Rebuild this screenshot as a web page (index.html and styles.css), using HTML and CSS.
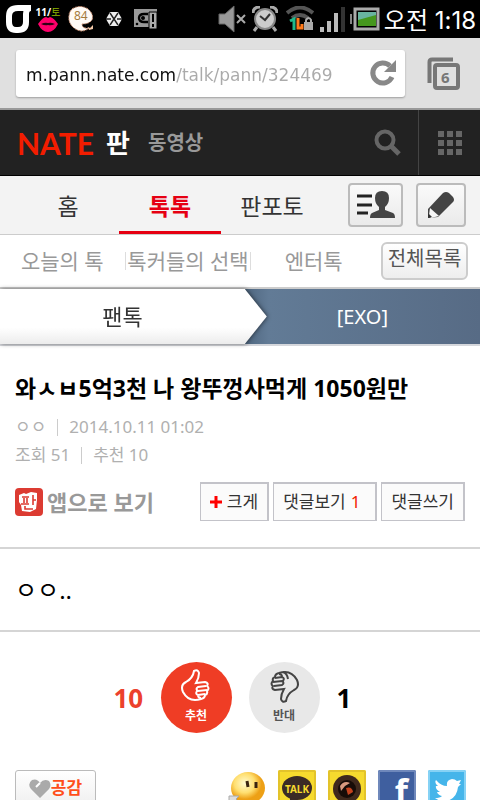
FILE: index.html
```html
<!DOCTYPE html>
<html lang="ko">

<head>
    <meta charset="UTF-8">
    <meta name="viewport" content="width=device-width, initial-scale=1.0">
    <title>네이트 판</title>
    <link rel="stylesheet" href="styles.css">
</head>

<body>
    <div class="screen">
        <!-- 상태바 -->
        <div class="status">
            <svg class="status-logo" width="28" height="30" viewBox="0 0 28 30">
                <path d="M27 4H14Q5 4 5 12v6q0 8 7 8h2q8 0 8-8V10q0-6 5-6" fill="none" stroke="#fff" stroke-width="6" />
            </svg>
            <div class="dday">
                <span class="dday-text">11/<b>토</b></span>
                <svg width="20" height="15" viewBox="0 0 20 15">
                    <path d="M0 7Q5 0 8 0l2 1 2-1q4 1 8 7-4 8-10 8T0 7z" fill="#ff006b" />
                    <path d="M3 7q4-2 7-1 3-1 7 1-4 2-7 1-3 1-7-1z" fill="#300015" />
                </svg>
            </div>
            <div class="bubble">
                <svg width="26" height="26" viewBox="0 0 26 26">
                    <path d="M4 3Q12-2 20 3q6 5 4 11-3 4-10 4 0 5 7 4-7 6-15 0Q0 17 1 10q0-4 3-7z" fill="#fffaf5" stroke="#d89878" stroke-dasharray="2 1" />
                    <path d="M20 21l2 1 3-3v4l-4 1z" fill="#f4c9a8" />
                </svg>
                <span class="bubble-text">84</span>
            </div>
            <svg class="status-exo" width="16" height="16" viewBox="0 0 16 16">
                <path d="M4 1h8l4 7-4 7H4L0 8z" fill="#eee" />
                <path d="M4 2l8 12M12 2L4 14M0 8h5M11 8h5" stroke="#222" stroke-width="1.4" />
            </svg>
            <svg class="status-disk" width="24" height="20" viewBox="0 0 24 20">
                <path d="M0 0h23v9h-7v9H0z" fill="#999" />
                <path d="M14 5H10Q5 5 5 9t5 4h4" fill="none" stroke="#000" stroke-width="2.4" />
                <circle cx="9" cy="9" r="2" fill="#000" />
                <circle cx="3" cy="15" r="1.3" fill="#000" />
                <path d="M15 3h8v17h-8z" fill="#aaa" stroke="#000" />
                <path d="M19 5v8M19 15v3" stroke="#000" stroke-width="2" />
            </svg>
            <div class="status-right">
                <svg width="30" height="28" viewBox="0 0 30 28">
                    <path d="M1 9h6l9-8v26l-9-8H1z" fill="#999" stroke="#666" />
                    <path d="M19 10l8 8M27 10l-8 8" stroke="#aaa" stroke-width="2" />
                </svg>
                <svg width="26" height="26" viewBox="0 0 26 26">
                    <path d="M5 21l-3 4M21 21l3 4" stroke="#aaa" stroke-width="3" />
                    <path d="M1 7q0-6 7-6M25 7q0-6-7-6" fill="none" stroke="#aaa" stroke-width="3" />
                    <circle cx="13" cy="13" r="10" fill="#ccc" stroke="#888" stroke-width="2" />
                    <path d="M8 10l5 4 5-6" fill="none" stroke="#333" stroke-width="2" />
                </svg>
                <svg class="status-wifi" width="28" height="26" viewBox="0 0 28 26">
                    <path d="M1 7q13-11 26 0M6 12q8-6 16 0" fill="none" stroke="#555" stroke-width="4" />
                    <path d="M4 15l4-2v11" fill="none" stroke="#1fb88a" stroke-width="3" />
                    <path d="M12 12v10h4v-4" fill="none" stroke="#ff7a1a" stroke-width="3" />
                    <path d="M20 17v-3q3-4 5 0v3" fill="none" stroke="#aaa" stroke-width="2" />
                    <path d="M18 16h9v8h-9z" fill="#aaa" />
                </svg>
                <svg class="status-signal" width="25" height="25" viewBox="0 0 25 25">
                    <path d="M0 20h4v5H0zM7 14h4v11H7zM14 6h4v19h-4z" fill="#bbb" />
                    <path d="M21 0h4v25h-4z" fill="#333" />
                </svg>
                <svg width="30" height="24" viewBox="0 0 30 24">
                    <path d="M1 7v10" stroke="#888" stroke-width="2" />
                    <path d="M5 2h23v20H5z" fill="#000" stroke="#aaa" stroke-width="3" />
                    <path d="M8 5h18v14H8z" fill="#45971d" />
                    <path d="M8 5h18v3L8 13z" fill="#69b4a0" />
                </svg>
                <span class="clock">오전 1:18</span>
            </div>
        </div>

        <!-- 주소창 -->
        <div class="browser">
            <div class="omnibox">
                <input class="url" type="text" value="m.pann.nate.com/talk/pann/324469" aria-label="주소">
                <button class="plain" type="button" aria-label="새로고침">
                    <svg width="28" height="28" viewBox="0 0 28 28">
                        <path d="M21 7A10 10 0 1 0 23 18" fill="none" stroke="#888" stroke-width="5" />
                        <path d="M27 1v12H15z" fill="#888" />
                    </svg>
                </button>
            </div>
            <button class="plain windows" type="button" aria-label="탭">
                <svg width="33" height="33" viewBox="0 0 33 33">
                    <path d="M2.500 26V5q0-2.500 2.500-2.500h21" fill="none" stroke="#777" stroke-width="4" />
                    <rect x="8" y="8" width="23" height="23" rx="2" fill="#e0e0e0" stroke="#777" stroke-width="4" />
                </svg>
                <span class="windows-count">6</span>
            </button>
        </div>

        <header class="header">
            <a class="logo" href="#">NATE</a>
            <a class="service" href="#">판</a>
            <a class="video" href="#">동영상</a>
            <button class="plain search" type="button" aria-label="검색">
                <svg width="28" height="28" viewBox="0 0 28 28">
                    <circle cx="11" cy="11" r="8.500" fill="none" stroke="#666" stroke-width="4" />
                    <path d="M17 17l8 8" stroke="#666" stroke-width="5" />
                </svg>
            </button>
            <button class="plain menu" type="button" aria-label="전체 서비스">
                <svg width="24" height="24" viewBox="0 0 24 24">
                    <path d="M0 0h6v6H0zM9 0h6v6H9zM18 0h6v6h-6zM0 9h6v6H0zM9 9h6v6H9zM18 9h6v6h-6zM0 18h6v6H0zM9 18h6v6H9zM18 18h6v6h-6z" fill="#666" />
                </svg>
            </button>
        </header>

        <nav class="tabs">
            <a class="tab" href="#">홈</a>
            <a class="tab on" href="#">톡톡</a>
            <a class="tab" href="#">판포토</a>
            <button class="tool tool-user" type="button" aria-label="내 글">
                <svg width="40" height="28" viewBox="0 0 40 28">
                    <path d="M1 5h15M1 14h15M1 22h11" stroke="#222" stroke-width="3" />
                    <path d="M26 0q7 0 7 7 0 6-4 9v3l8 3q2 1 2 5H14q0-4 2-5l7-3v-3q-4-3-4-9 0-7 7-7z" fill="#444" />
                </svg>
            </button>
            <button class="tool" type="button" aria-label="글쓰기">
                <svg width="28" height="28" viewBox="0 0 28 28">
                    <path d="M1 27V18L16 2q3-2 6 0l4 4q2 3 0 5L11 26z" fill="#444" />
                    <path d="M3 17l9 8-8 2-2-3z" fill="#f5f5f5" />
                    <path d="M1 27v-5l4 4z" fill="#333" />
                </svg>
            </button>
        </nav>

        <nav class="subnav">
            <a class="sub" href="#">오늘의 톡</a>
            <a class="sub" href="#">톡커들의 선택</a>
            <a class="sub" href="#">엔터톡</a>
            <button class="all" type="button">전체목록</button>
        </nav>

        <div class="path">
            <a class="path-item path-first" href="#">팬톡</a>
            <a class="path-item" href="#">[EXO]</a>
        </div>

        <main>
            <section class="post-head">
                <h1 class="title">와ㅅㅂ5억3천 나 왕뚜껑사먹게 1050원만</h1>
                <p class="meta"><span>ㅇㅇ</span><i class="bar"></i><span>2014.10.11 01:02</span></p>
                <p class="meta"><span>조회 51</span><i class="bar"></i><span>추천 10</span></p>
                <div class="actions">
                    <a class="app" href="#">
                        <svg width="28" height="28" viewBox="0 0 28 28">
                            <rect width="28" height="28" rx="4" fill="#dc3b32" />
                            <path d="M4 7l5-2 2 1 5-2 6 1v7l-1 9-6 3-8-1-1-6-2-3z" fill="#fff" />
                            <path d="M7 9h7M9 10v5M12 10v5M6 16h8M18 7v10M18 12h3M10 18v3h8" fill="none" stroke="#dc3b32" stroke-width="1.6" />
                        </svg>
                        <span>앱으로 보기</span>
                    </a>
                    <button class="act" type="button">
                        <svg width="12" height="12" viewBox="0 0 12 12">
                            <path d="M6 0v12M0 6h12" stroke="#f00" stroke-width="3" />
                        </svg>
                        크게
                    </button>
                    <button class="act act-count" type="button">댓글보기 <em>1</em></button>
                    <button class="act" type="button">댓글쓰기</button>
                </div>
            </section>

            <section class="post-body">ㅇㅇ..</section>

            <section class="vote">
                <span class="num num-up">10</span>
                <button class="circle up" type="button">
                    <svg width="32" height="34" viewBox="0 0 32 34">
                        <path d="M3 23q-3-7 3-10 7-4 8-11 4-2 5 2 0 5-3 10l9-1q4 1 2 4 3 2 0 5 1 3-2 4 0 3-4 4-12 4-18-7z" fill="none" stroke="#fff" stroke-width="2" />
                        <path d="M26 17l-8 1q-3 2 0 4l9-1M17 22q-2 3 1 4l7-1M18 26q0 3 3 3" fill="none" stroke="#fff" stroke-width="2" />
                    </svg>
                    <span>추천</span>
                </button>
                <button class="circle down" type="button">
                    <svg width="32" height="34" viewBox="0 0 32 34">
                        <path d="M29 11q3 7-3 10-7 4-8 11-4 2-5-2 0-5 3-10l-9 1q-4-1-2-4-3-2 0-5-1-3 2-4 0-3 4-4 12-4 18 7z" fill="none" stroke="#444" stroke-width="2" />
                        <path d="M6 17l8-1q3-2 0-4l-9 1M15 12q2-3-1-4l-7 1M14 8q0-3-3-3M15 3q4 1 5 7" fill="none" stroke="#444" stroke-width="2" />
                    </svg>
                    <span>반대</span>
                </button>
                <span class="num">1</span>
            </section>

            <section class="share">
                <button class="like" type="button">
                    <svg width="22" height="19" viewBox="0 0 22 19">
                        <path d="M11 19L2 10Q-2 5 3 1q5-2 8 3 4-5 9-2 3 4 0 8z" fill="#aaa" />
                        <path d="M11 4L7 8" stroke="#fff" stroke-width="2" />
                    </svg>
                    공감
                </button>
                <a class="sns" href="#" aria-label="네이트온">
                    <svg width="38" height="38" viewBox="0 0 38 38">
                        <defs>
                            <radialGradient id="face" cx=".4" cy=".35">
                                <stop offset="0" stop-color="#fffbd0" />
                                <stop offset=".6" stop-color="#ffdf70" />
                                <stop offset="1" stop-color="#eda016" />
                            </radialGradient>
                        </defs>
                        <ellipse cx="20" cy="18" rx="17" ry="16" fill="url(#face)" />
                        <path d="M19 11l1 6M28 12v6" stroke="#3a2410" stroke-width="3" />
                        <path d="M1 26h10l-3 3 5 5-3 4-6-5-3 3z" fill="#ddd" stroke="#aaa" />
                    </svg>
                </a>
                <a class="sns talk" href="#" aria-label="카카오톡">
                    <svg width="38" height="38" viewBox="0 0 38 38">
                        <ellipse cx="19" cy="18" rx="15" ry="12" fill="#3b2b26" />
                        <path d="M12 27v8l8-6z" fill="#3b2b26" />
                    </svg>
                    <span class="talk-text">TALK</span>
                </a>
                <a class="sns story" href="#" aria-label="카카오스토리">
                    <svg width="38" height="38" viewBox="0 0 38 38">
                        <circle cx="19" cy="19" r="14" fill="#40291d" />
                        <circle cx="19" cy="19" r="9" fill="#180c08" />
                        <path d="M12 16q4-6 10-3l-5 3-4 5z" fill="#d99a80" />
                        <path d="M18 18q6-2 7 4l-5 3z" fill="#c6431e" />
                    </svg>
                </a>
                <a class="sns facebook" href="#">f</a>
                <a class="sns twitter" href="#" aria-label="트위터">
                    <svg width="38" height="38" viewBox="0 0 38 38">
                        <path d="M8 10q5 6 11 6-1-6 5-7 3 0 5 2l4-1-2 4 2 0-3 3q-1 11-11 14-7 1-12-3 5 0 7-2-4-1-5-4h3q-5-3-4-6l2 0Q6 13 8 10z" fill="#fff" />
                    </svg>
                </a>
            </section>
        </main>
    </div>
</body>

</html>
```
FILE: styles.css
```css
* {
    box-sizing: border-box;
}

body {
    margin: 0;
    background: #fff;
    color: #000;
    font-family: "Noto Sans", "Noto Sans CJK KR", sans-serif;
}

a {
    color: inherit;
    text-decoration: none;
}

button {
    padding: 0;
    font-family: inherit;
    color: inherit;
}

svg {
    display: block;
    flex: none;
}

h1,
p {
    margin: 0;
}

.screen {
    height: 100vh;
    overflow: hidden;
}

.plain {
    border: 0;
    background: none;
}

/* 상태바 */
.status {
    display: flex;
    align-items: center;
    height: 38px;
    padding: 0 4px;
    background: #000;
    color: #fff;
}

.dday {
    display: flex;
    flex-direction: column;
    align-items: center;
    width: 28px;
    margin-left: 2px;
}

.dday-text {
    font-size: 10px;
    line-height: 10px;
    font-weight: bold;
}

.dday-text b {
    font-weight: normal;
    color: #8db600;
}

.bubble {
    position: relative;
    margin-left: 6px;
}

.bubble-text {
    position: absolute;
    top: 4px;
    left: 6px;
    font-size: 12px;
    line-height: 12px;
    color: #a57b3c;
}

.status-exo {
    margin-left: 12px;
}

.status-disk {
    margin-left: 12px;
}

.status-right {
    display: flex;
    align-items: center;
    gap: 4px;
    margin-left: auto;
}

.status-signal {
    margin: 0 1px 0 2px;
}

.status-wifi {
    margin-left: 4px;
}

.clock {
    padding-top: 4px;
    font-family: Inter, "Noto Sans CJK KR", sans-serif;
    font-size: 24px;
    line-height: 30px;
    white-space: nowrap;
}

/* 주소창 */
.browser {
    display: flex;
    align-items: center;
    height: 72px;
    padding: 0 20px 0 16px;
    border-bottom: 2px solid #999;
    background: #e0e0e0;
}

.omnibox {
    display: flex;
    flex: 1;
    align-items: center;
    gap: 8px;
    min-width: 0;
    height: 47px;
    padding: 0 8px 0 10px;
    border-radius: 3px;
    background: #fff;
    box-shadow: 0 1px 2px rgba(0, 0, 0, .3);
}

.url {
    flex: 1;
    min-width: 0;
    padding: 4px 0 0;
    border: 0;
    outline: 0;
    background: linear-gradient(90deg, #111 149px, #aaa 149px);
    -webkit-background-clip: text;
    background-clip: text;
    color: transparent;
    font-family: "DejaVu Sans", sans-serif;
    font-size: 17px;
    line-height: 28px;
}

.windows {
    position: relative;
    margin-left: 22px;
}

.windows-count {
    position: absolute;
    top: 10px;
    left: 14px;
    font-size: 15px;
    line-height: 20px;
    font-weight: bold;
    color: #777;
}

/* 헤더 */
.header {
    display: flex;
    align-items: center;
    height: 66px;
    padding-left: 17px;
    border-bottom: 1px solid #000;
    background: #222;
}

.logo {
    font-family: Lato, sans-serif;
    font-size: 30px;
    font-weight: bold;
    color: #f21d00;
}

.service {
    margin-left: 12px;
    font-size: 26px;
    line-height: 36px;
    font-weight: bold;
    color: #fff;
}

.video {
    margin-left: 18px;
    font-size: 20px;
    line-height: 30px;
    font-weight: bold;
    color: #999;
}

.search {
    margin: 0 16px 0 auto;
}

.menu {
    display: flex;
    align-items: center;
    justify-content: center;
    width: 62px;
    height: 65px;
    border-left: 1px solid #444;
}

/* 탭 */
.tabs {
    display: flex;
    align-items: center;
    height: 59px;
    padding: 0 14px 0 17px;
    border-bottom: 1px solid #ccc;
    background: #f3f3f3;
}

.tab {
    flex: 1;
    height: 58px;
    border-bottom: 3px solid transparent;
    font-size: 23px;
    line-height: 60px;
    text-align: center;
    color: #333;
}

.tab.on {
    border-color: #e60012;
    font-weight: bold;
    color: #e60012;
}

.tool {
    display: flex;
    align-items: center;
    justify-content: center;
    width: 50px;
    height: 44px;
    border: 2px solid #bbb;
    border-radius: 4px;
    background: linear-gradient(#fafafa, #eaeaea);
}

.tool-user {
    width: 55px;
    margin: 0 13px 0 25px;
}

.subnav {
    display: flex;
    align-items: center;
    height: 54px;
    padding-right: 12px;
    border-bottom: 2px solid #ccc;
}

.sub {
    flex: 1 0 0;
    font-size: 21px;
    line-height: 18px;
    text-align: center;
    white-space: nowrap;
    color: #999;
}

.sub + .sub {
    border-left: 1px solid #ddd;
}

.all {
    width: 87px;
    height: 38px;
    margin-left: 5px;
    padding-bottom: 4px;
    border: 2px solid #ccc;
    border-radius: 6px;
    background: linear-gradient(#fff, #eee);
    font-size: 20px;
    line-height: 30px;
    white-space: nowrap;
    color: #555;
}

.path {
    display: flex;
    height: 57px;
    border-bottom: 2px solid #d5d7dc;
    background: linear-gradient(90deg, #4f6780 51%, #627b96 56%, #576b85);
    color: #fff;
}

.path-item {
    flex: 1;
    font-size: 20px;
    line-height: 55px;
    text-align: center;
}

.path-first {
    position: relative;
    flex: 0 0 51%;
    background: linear-gradient(#fff 70%, #ececec);
    font-size: 22px;
    color: #333;
    filter: drop-shadow(1px 0 2px rgba(0, 0, 0, .5));
}

.path-first::after {
    content: "";
    position: absolute;
    top: 0;
    left: 100%;
    width: 22px;
    height: 100%;
    background: linear-gradient(#fff 70%, #ececec);
    clip-path: polygon(0 0, 100% 50%, 0 100%);
}

/* 본문 */
.post-head {
    padding: 25px 15px 26px;
    border-bottom: 2px solid #d5d5d5;
}

.title {
    margin-bottom: 8px;
    font-size: 23px;
    line-height: 34px;
    white-space: nowrap;
}

.meta {
    display: flex;
    align-items: center;
    font-size: 17px;
    line-height: 28px;
    color: #b0b0b0;
}

.bar {
    width: 1px;
    height: 17px;
    margin: 0 11px;
    background: #ccc;
}

.actions {
    display: flex;
    align-items: center;
    gap: 4px;
    margin-top: 13px;
}

.app {
    display: flex;
    align-items: center;
    gap: 4px;
    margin-right: auto;
    font-size: 22px;
    line-height: 32px;
    font-weight: bold;
    white-space: nowrap;
    color: #999;
}

.act {
    display: flex;
    align-items: center;
    gap: 5px;
    height: 39px;
    padding: 0 9px;
    border: solid #c3c3c9;
    border-width: 2px 2px 1px 1px;
    background: #fbfbfb;
    font-size: 17px;
    line-height: 24px;
    white-space: nowrap;
    color: #333;
}

.act-count {
    padding-right: 15px;
}

.act em {
    font-style: normal;
    color: #f21d00;
}

.post-body {
    padding: 24px 15px 23px;
    border-bottom: 2px solid #d5d5d5;
    font-size: 24px;
    line-height: 34px;
}

.vote {
    display: flex;
    align-items: center;
    justify-content: center;
    gap: 17px;
    padding: 30px 15px;
}

.num {
    width: 30px;
    font-size: 26px;
    line-height: 36px;
    font-weight: bold;
}

.num-up {
    color: #ec412c;
}

.circle {
    display: flex;
    flex-direction: column;
    align-items: center;
    gap: 5px;
    width: 71px;
    height: 71px;
    padding-top: 7px;
    border: 0;
    border-radius: 50%;
    font-size: 12px;
    line-height: 16px;
    font-weight: bold;
}

.up {
    background: #ef3d25;
    color: #fff;
}

.down {
    background: #e8e8e8;
    color: #555;
}

.share {
    display: flex;
    gap: 12px;
    padding: 7px 14px 7px 15px;
}

.like {
    display: flex;
    align-items: center;
    justify-content: center;
    width: 81px;
    height: 36px;
    margin-right: auto;
    border: 1px solid #bbb;
    border-radius: 3px;
    background: linear-gradient(#fff, #f0f0f0);
    font-size: 17px;
    line-height: 20px;
    font-weight: bold;
    color: #ff4e1a;
}

.sns {
    position: relative;
    width: 38px;
    height: 38px;
}

.talk,
.story {
    border-radius: 2px;
    background: #f6da2e;
    box-shadow: inset 0 0 0 2px #e3c32a;
}

.talk-text {
    position: absolute;
    top: 12px;
    left: 0;
    width: 100%;
    font-size: 10px;
    line-height: 14px;
    font-weight: bold;
    text-align: center;
    color: #f6da2e;
}

.facebook {
    padding-right: 8px;
    border-radius: 2px;
    background: #3f5f9f;
    box-shadow: inset 0 0 0 2px #6f88bb;
    font-size: 34px;
    line-height: 42px;
    font-weight: bold;
    text-align: right;
    color: #fff;
}

.twitter {
    border-radius: 2px;
    background: #45b5ea;
    box-shadow: inset 0 0 0 2px #86d2f5;
}
```
